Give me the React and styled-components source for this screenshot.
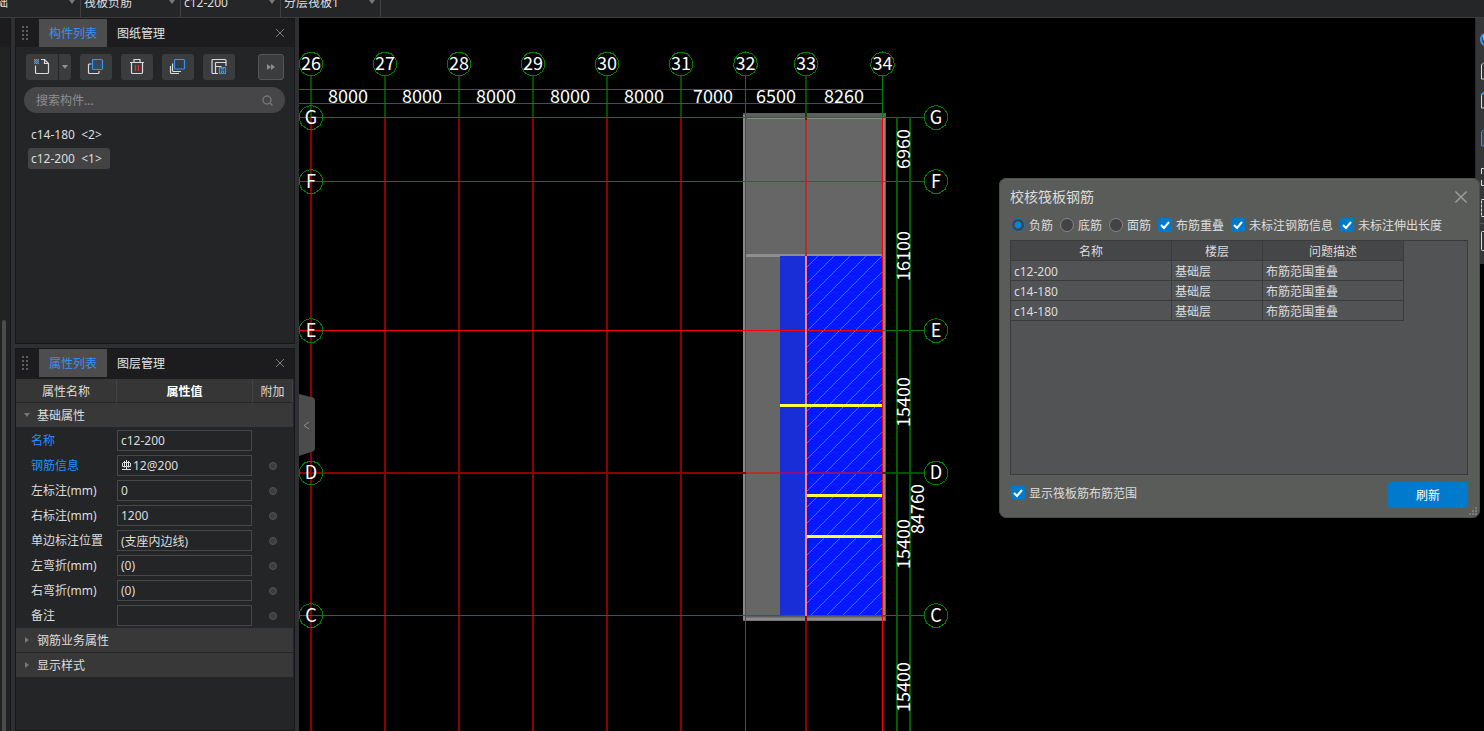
import React from "react";
import styled, { createGlobalStyle, css } from "styled-components";

const Global = createGlobalStyle`
  * { box-sizing: border-box; }
  body {
    margin: 0;
    background: #000;
    overflow: hidden;
    color: #dcdcdc;
    font: 12px/16px "Noto Sans", "Noto Sans CJK SC", sans-serif;
  }
  button, input, select { font: inherit; color: inherit; margin: 0; }
  button { padding: 0; border: 0; background: none; display: flex; align-items: center; justify-content: center; }
`;

const Page = styled.div`
  display: flex;
  flex-direction: column;
  height: 100vh;
`;

/* ---- context bar ---- */
const ContextBar = styled.header`
  display: flex;
  align-items: flex-end;
  flex: none;
  height: 18px;
  overflow: hidden;
  background: #252628;
  border-bottom: 1px solid #3a3c3e;
`;
const Picker = styled.div`
  position: relative;
  flex: none;
  width: ${(p) => (p.$first ? 81 : 100)}px;
  border-right: 1px solid #3f4042;
  svg { position: absolute; right: 5px; top: 10px; pointer-events: none; }
`;
const PickerSelect = styled.select`
  display: block;
  appearance: none;
  width: 100%;
  height: 28px;
  padding: 0 ${(p) => (p.$first ? 0 : 3)}px;
  text-indent: ${(p) => (p.$first ? -4 : 0)}px;
  border: 0;
  background: transparent;
`;

/* ---- main split ---- */
const Workspace = styled.main`
  position: relative;
  display: flex;
  flex: 1;
  min-height: 0;
`;
const NavStrip = styled.nav`
  flex: none;
  width: 11px;
  padding: 302px 0 0 2px;
  background: linear-gradient(#1c1c1f 29px, #212323 29px);
  border-right: 1px solid #171719;
`;
const NavThumb = styled.div`
  width: 4px;
  height: 100%;
  border-radius: 2px 2px 0 0;
  background: #4b4b4e;
`;
const Side = styled.aside`
  display: flex;
  flex-direction: column;
  gap: 4px;
  flex: none;
  width: 288px;
  padding: 0 4px;
  background: #2e2f32;
`;
const Panel = styled.section`
  display: flex;
  flex-direction: column;
  flex: ${(p) => (p.$grow ? "1" : "0 0 326px")};
  min-height: 0;
  background: #242527;
  border: 1px solid #18181a;
`;
const PanelTabs = styled.div`
  display: flex;
  align-items: flex-start;
  flex: none;
  height: ${(p) => (p.$tall ? 30 : 28)}px;
  padding: 0 7px 0 5px;
  background: #1c1c1f;
`;
const Grip = styled.svg`
  width: 8px;
  height: 28px;
  margin-right: 10px;
  fill: #5d5d60;
`;
const Tab = styled.button`
  height: 28px;
  width: 68px;
  padding-top: 2px;
  color: ${(p) => (p.$active ? "#3a8ff7" : "#e4e4e4")};
  background: ${(p) => (p.$active ? "#4d4d4e" : "transparent")};
`;
const CloseButton = styled.button`
  width: 14px;
  height: 28px;
  margin-left: auto;
  color: #7c7c7e;
`;
const Tools = styled.div`
  display: flex;
  gap: 9px;
  padding: 7px 10px;
`;
const Tool = styled.button`
  width: 32px;
  height: 26px;
  border-radius: 3px;
  background: #3b3c3e;
`;
const SplitTool = styled.div`
  display: flex;
  gap: 1px;
  ${Tool}:first-child { border-radius: 3px 0 0 3px; }
  ${Tool}:last-child { width: 12px; border-radius: 0 3px 3px 0; }
`;
const MoreTool = styled(Tool)`
  width: 26px;
  margin-left: auto;
  border: 1px solid #55565a;
`;
const Search = styled.label`
  display: flex;
  align-items: center;
  height: 26px;
  margin: 0 9px 0 8px;
  padding: 0 12px;
  border-radius: 13px;
  background: #464648;
`;
const SearchInput = styled.input`
  flex: 1;
  min-width: 0;
  padding: 2px 0 0;
  border: 0;
  outline: 0;
  background: none;
  &::placeholder { color: #8e8e90; opacity: 1; }
`;
const Items = styled.ul`
  display: flex;
  flex-direction: column;
  align-items: flex-start;
  gap: 3px;
  margin: 11px 0 0;
  padding: 0 12px;
  list-style: none;
`;
const Item = styled.li`
  height: 21px;
  padding: 0 8px 0 3px;
  line-height: 21px;
  white-space: pre;
  border-radius: 3px;
  background: ${(p) => (p.$active ? "#434344" : "transparent")};
`;

/* ---- property table ---- */
const PropTable = styled.table`
  width: calc(100% - 1px);
  table-layout: fixed;
  border-collapse: separate;
  border-spacing: 0;
`;
const PropHead = styled.th`
  height: 24px;
  padding: 2px 0 0;
  font-weight: ${(p) => (p.$strong ? 700 : 400)};
  color: ${(p) => (p.$strong ? "#fff" : "#dcdcdc")};
  background: #363637;
  border-right: 1px solid #444446;
  border-bottom: 1px solid #242527;
`;
const PropGroup = styled.th`
  height: 25px;
  padding: 2px 0 0 8px;
  text-align: left;
  font-weight: 400;
  background: #383838;
  border-bottom: 1px solid #242527;
  svg { margin-right: 4px; vertical-align: 2px; }
`;
const PropName = styled.th`
  height: 25px;
  padding: 0 0 0 15px;
  text-align: left;
  font-weight: 400;
  white-space: nowrap;
  color: ${(p) => (p.$key ? "#2090ff" : "#dcdcdc")};
`;
const PropCell = styled.td`
  padding: 0;
  text-align: center;
`;
const PropField = styled.label`
  display: flex;
  align-items: center;
  gap: 1px;
  width: calc(100% - 1px);
  height: 21px;
  padding: 0 3px;
  border: 1px solid #48484a;
`;
const PropInput = styled.input`
  flex: 1;
  min-width: 0;
  height: 19px;
  padding: 0;
  border: 0;
  outline: 0;
  background: none;
`;
const ExtraRadio = styled.input`
  appearance: none;
  display: block;
  width: 8px;
  height: 8px;
  margin: 0 auto;
  border: 1px solid #545454;
  border-radius: 50%;
  background: #3e3e3e;
`;

/* ---- drawing area ---- */
const Stage = styled.div`
  position: relative;
  flex: 1;
  min-width: 0;
  background: #000;
`;
const Drawing = styled.svg`
  display: block;
  width: 100%;
  height: 100%;
  text { fill: #fff; font: 18px "Noto Sans CJK SC", sans-serif; text-anchor: middle; }
`;
const CollapseHandle = styled.button`
  position: absolute;
  left: 0;
  top: 376px;
  width: 16px;
  height: 62px;
`;
const RightBar = styled.div`
  display: flex;
  flex-direction: column;
  align-self: flex-start;
  flex: none;
  width: 9px;
  height: 246px;
  overflow: hidden;
  background: #353638;
  border-left: 1px solid #2a2b2d;
`;
const RightTool = styled.button`
  flex: none;
  justify-content: flex-start;
  width: 30px;
  padding-left: 4px;
  height: ${(p) => p.$h}px;
  border-top: ${(p) => (p.$sep ? "1px solid #58595b" : "0")};
`;

/* ---- dialog ---- */
const Dialog = styled.div`
  position: absolute;
  top: 160px;
  right: 4px;
  width: 481px;
  padding: 0 12px 10px;
  border-radius: 8px;
  background: #5a5c5a;
  box-shadow: inset 0 0 0 1px #4a4c4a, inset 0 2px 0 #626462;
`;
const DialogHead = styled.div`
  display: flex;
  align-items: center;
  justify-content: space-between;
  height: 38px;
  margin-left: -1px;
`;
const DialogTitle = styled.h2`
  margin: 0;
  font-size: 14px;
  line-height: 20px;
  font-weight: 400;
`;
const DialogClose = styled.button`
  width: 14px;
  height: 20px;
  color: #9c9e9c;
`;
const Filters = styled.div`
  display: flex;
  gap: 7px;
  height: 18px;
`;
const Choice = styled.label`
  display: flex;
  align-items: center;
  gap: 4px;
  white-space: nowrap;
`;
const ChoiceText = styled.span`
  padding-top: 2px;
`;
const mark = css`
  appearance: none;
  flex: none;
  width: 14px;
  height: 14px;
`;
const Radio = styled.input`
  ${mark}
  border-radius: 50%;
  border: 1px solid #858585;
  background: #434345;
  &:checked {
    border-color: #0a7acc;
    background: radial-gradient(circle, #0a84d8 3px, #434345 4px);
  }
`;
const Check = styled.input`
  ${mark}
  border-radius: 2px;
  background: #007acc;
`;
const CheckBox = styled.span`
  display: grid;
  > * { grid-area: 1 / 1; }
  svg { pointer-events: none; }
`;
const TableBox = styled.div`
  height: 235px;
  margin: 6px 0 7px -1px;
  border: 1px solid #3a3b3c;
  background: #525355;
`;
const Issues = styled.table`
  width: 393px;
  table-layout: fixed;
  border-collapse: separate;
  border-spacing: 0;
  th, td {
    height: 20px;
    padding: 2px 3px 0;
    line-height: 17px;
    text-align: left;
    font-weight: 400;
    border-right: 1px solid #3a3b3c;
    border-bottom: 1px solid #3a3b3c;
  }
  th { text-align: center; background: #454648; }
`;
const DialogFoot = styled.div`
  display: flex;
  align-items: flex-start;
  justify-content: space-between;
  ${Choice} { height: 22px; }
`;
const Refresh = styled.button`
  width: 80px;
  height: 26px;
  padding-top: 1px;
  border-radius: 3px;
  color: #fff;
  background: #007acc;
`;
const ResizeGrip = styled.svg`
  position: absolute;
  right: 3px;
  bottom: 3px;
  fill: #7b7d7d;
`;

const Cross = ({ size }) => (
  <svg width={size} height={size} viewBox="0 0 10 10" stroke="currentColor" fill="none">
    <path d="M1 1l8 8M9 1l-8 8" />
  </svg>
);
const Caret = ({ color = "#77777a", side }) => (
  <svg width="6" height="6" viewBox="0 0 6 6" fill={color}>
    <path d={side ? "M1 0l4 3-4 3z" : "M0 1h6l-3 4z"} />
  </svg>
);

/* HRB400 steel grade mark */
const RebarMark = () => (
  <svg width="11" height="12" viewBox="0 0 11 12" fill="none" stroke="#dcdcdc">
    <path d="M5.500 0V10M1 9.500h9M2 2.500h7M3.500 1v6.500M7.500 1v6.500M1.500 3v3.500h8V3" />
  </svg>
);

const GripDots = () => (
  <Grip viewBox="0 0 8 28">
    {[7, 11, 15, 19].map((y) => (
      <g key={y}>
        <rect x="1" y={y} width="2" height="2" />
        <rect x="5" y={y} width="2" height="2" />
      </g>
    ))}
  </Grip>
);

const Icon = ({ children }) => (
  <svg width="18" height="18" viewBox="0 0 18 18" fill="none" stroke="#dadada" strokeWidth="1.2">
    {children}
  </svg>
);
const NewIcon = () => (
  <Icon>
    <path d="M2.500 7.500v7a1 1 0 0 0 1 1h11a1 1 0 0 0 1-1V5.500L11.500 1.500H8M11.500 1.500v4h4" />
    <g fill="#4a9be8" stroke="none">
      <path d="M1 1h1v1H1zM3 1h1v1H3zM5 1h1v1H5zM2 2h1v1H2zM4 2h1v1H4zM1 3h1v1H1zM3 3h1v1H3zM5 3h1v1H5zM2 4h1v1H2zM4 4h1v1H4zM1 5h1v1H1zM3 5h1v1H3zM5 5h1v1H5z" />
      <path d="M1 1h5v5H1z" opacity=".4" />
    </g>
  </Icon>
);
const CopyIcon = () => (
  <Icon>
    <path d="M4.500 6H2.500a1 1 0 0 0-1 1v7.500a1 1 0 0 0 1 1H11a1 1 0 0 0 1-1V13" />
    <rect x="5.500" y="1.500" width="10" height="10" rx="1" fill="#34495f" stroke="#3a93ea" />
  </Icon>
);
const TrashIcon = () => (
  <Icon>
    <path d="M2 4.500h14M6 4V1.500h6V4M3.500 5v9.500a1 1 0 0 0 1 1h9a1 1 0 0 0 1-1V5" />
    <path d="M7.500 7v6M10.500 7v6" stroke="#e03030" />
  </Icon>
);
const LayersIcon = () => (
  <Icon>
    <path d="M3.500 5.500v7a1 1 0 0 0 1 1H12M1.500 8v6.500a1 1 0 0 0 1 1H10" />
    <rect x="5.500" y="1.500" width="10" height="9.500" rx="1" fill="#303c4c" stroke="#3a93ea" />
  </Icon>
);
const SaveIcon = () => (
  <Icon>
    <path d="M8 15.500H3a1 1 0 0 1-1-1v-12a1 1 0 0 1 1-1h12a1 1 0 0 1 1 1V8M5.500 4.500v11M5.500 8.500h6M5.500 4.500H16" />
    <path d="M9.500 9.500h6v6h-6zM11.500 15v-2h2v2M11.500 10v1h2v-1" stroke="#3a93ea" />
  </Icon>
);

/* grid axes, in drawing coordinates */
const columns = [
  ["26", 12, 2], ["27", 86, 2], ["28", 160, 2], ["29", 234, 2], ["30", 308, 2],
  ["31", 382, 2], ["32", 446.5, 1], ["33", 507, 2], ["34", 583.5, 1],
];
const rows = [["G", 99.5, 1], ["F", 163.5, 1], ["E", 312.5, 1], ["D", 455, 2], ["C", 597.5, 1]];
const spans = [
  ["8000", 49], ["8000", 123], ["8000", 197], ["8000", 271], ["8000", 345],
  ["7000", 414], ["6500", 477], ["8260", 545],
];
const heights = [
  ["6960", 604, 131], ["16100", 604, 238], ["15400", 604, 384],
  ["15400", 604, 526], ["15400", 604, 669], ["84760", 618, 491],
];
const ring = Array.from({ length: 11 }, (_, i) => {
  const a = (i * 2 * Math.PI) / 11 - Math.PI / 2;
  return `${(12 * Math.cos(a)).toFixed(1)},${(12 * Math.sin(a)).toFixed(1)}`;
}).join(" ");

const Bubble = ({ x, y, children }) => (
  <g transform={`translate(${x} ${y})`}>
    <polygon points={ring} fill="none" stroke="#008000" shapeRendering="crispEdges" />
    <text y="6">{children}</text>
  </g>
);
const red = (w) => (w === 2 ? "#8b0000" : "#ff0000");
const green = (w) => (w === 2 ? "#004f00" : "#008000");

const Plan = () => (
  <Drawing>
    <defs>
      <pattern id="hatch" width="16" height="16" patternUnits="userSpaceOnUse" x="507" y="238">
        <path d="M-4 16L12 0M0 28L28 0" stroke="#f010ff" shapeRendering="crispEdges" />
      </pattern>
    </defs>
    <rect x="444" y="95" width="143" height="508" fill="#5e5e5e" />
    <path d="M445.500 97V601H586" fill="none" stroke="#8a8a8a" strokeWidth="3" />
    <path d="M448 100.500h137V598" fill="none" stroke="#8a8a8a" strokeWidth="2" />
    <rect x="447" y="101" width="135" height="496" fill="#666" />
    <path d="M447 237.500h136" stroke="#8e8e8e" strokeWidth="3" />
    <rect x="481" y="238" width="26" height="360" fill="#1a2ed8" />

    {columns.map(([n, x, w]) => (
      <g key={n}>
        <path d={`M${x} 57V100`} stroke={green(w)} strokeWidth={w} />
        <path d={`M${x} 99V2000`} stroke={red(w)} strokeWidth={w} />
      </g>
    ))}
    {rows.map(([n, y, w]) => (
      <g key={n}>
        <path d={`M0 ${y}H584`} stroke={red(w)} strokeWidth={w} />
        <path d={`M584 ${y}H625`} stroke={green(w)} strokeWidth={w} />
      </g>
    ))}
    <path d="M507 102V238M447 455H481" stroke="#b03030" strokeWidth="2" />

    <rect x="508" y="238" width="75" height="359" fill="#001aff" />
    <rect x="508" y="238" width="75" height="359" fill="url(#hatch)" />
    <path d="M481 455h102" stroke="#8c1080" strokeWidth="2" />
    <path d="M481 312.500h102" stroke="#ff0000" />
    <path d="M507 238V598" stroke="#ff8080" strokeWidth="2" />
    <path d="M481 387.500H583M508 477.500h75M508 518.500h75" stroke="#ffff40" strokeWidth="3" />

    <path d="M0 71.500H584M0 85.500H584" stroke="#008000" />
    <path d="M598 99V2000M611 99V2000" stroke="#006000" strokeWidth="2" />
    {spans.map(([t, x]) => <text key={x} x={x} y="85">{t}</text>)}
    {heights.map(([t, x, y]) => (
      <text key={y} transform={`translate(${x} ${y}) rotate(-90)`} y="7">{t}</text>
    ))}
    {columns.map(([n, x]) => <Bubble key={n} x={x} y={46}>{n}</Bubble>)}
    {rows.map(([n, y]) => (
      <g key={n}>
        <Bubble x={12} y={y}>{n}</Bubble>
        <Bubble x={637} y={y}>{n}</Bubble>
      </g>
    ))}
  </Drawing>
);

const props = [
  { name: "名称", value: "c12-200", key: true },
  { name: "钢筋信息", value: "12@200", key: true, extra: true, rebar: true },
  { name: "左标注(mm)", value: "0", extra: true },
  { name: "右标注(mm)", value: "1200", extra: true },
  { name: "单边标注位置", value: "(支座内边线)", extra: true },
  { name: "左弯折(mm)", value: "(0)", extra: true },
  { name: "右弯折(mm)", value: "(0)", extra: true },
  { name: "备注", value: "", extra: true },
];

const Checkbox = ({ children }) => (
  <Choice>
    <CheckBox>
      <Check type="checkbox" defaultChecked />
      <svg width="14" height="14" viewBox="0 0 14 14" fill="none" stroke="#fff" strokeWidth="2">
        <path d="M3 7l3 3 5-6" />
      </svg>
    </CheckBox>
    <ChoiceText>{children}</ChoiceText>
  </Choice>
);

const PanelHeader = ({ active, other, tall }) => (
  <PanelTabs $tall={tall}>
    <GripDots />
    <Tab $active>{active}</Tab>
    <Tab>{other}</Tab>
    <CloseButton aria-label="关闭"><Cross size={10} /></CloseButton>
  </PanelTabs>
);

export default function App() {
  return (
    <Page>
      <Global />
      <ContextBar>
        {["础", "筏板负筋", "c12-200", "分层筏板1"].map((t, i) => (
          <Picker key={t} $first={i === 0}>
            <PickerSelect $first={i === 0} aria-label={t}><option>{t}</option></PickerSelect>
            <Caret />
          </Picker>
        ))}
      </ContextBar>
      <Workspace>
        <NavStrip><NavThumb /></NavStrip>
        <Side>
          <Panel>
            <PanelHeader active="构件列表" other="图纸管理" />
            <Tools>
              <SplitTool>
                <Tool aria-label="新建"><NewIcon /></Tool>
                <Tool aria-label="新建选项"><Caret color="#8e8e90" /></Tool>
              </SplitTool>
              <Tool aria-label="复制"><CopyIcon /></Tool>
              <Tool aria-label="删除"><TrashIcon /></Tool>
              <Tool aria-label="层间复制"><LayersIcon /></Tool>
              <Tool aria-label="存档"><SaveIcon /></Tool>
              <MoreTool aria-label="更多">
                <svg width="8" height="6" viewBox="0 0 8 6" fill="#8c8c8e"><path d="M0 0l4 3-4 3zM4 0l4 3-4 3z" /></svg>
              </MoreTool>
            </Tools>
            <Search>
              <SearchInput placeholder="搜索构件..." aria-label="搜索构件" />
              <svg width="11" height="11" viewBox="0 0 11 11" fill="none" stroke="#747476" strokeWidth="1.500">
                <circle cx="5" cy="5" r="4" /><path d="M8 8l2.500 2.500" />
              </svg>
            </Search>
            <Items>
              <Item>{"c14-180  <2>"}</Item>
              <Item $active>{"c12-200  <1>"}</Item>
            </Items>
          </Panel>
          <Panel $grow>
            <PanelHeader active="属性列表" other="图层管理" tall />
            <PropTable>
              <colgroup><col width="101" /><col /><col width="40" /></colgroup>
              <thead>
                <tr><PropHead>属性名称</PropHead><PropHead $strong>属性值</PropHead><PropHead>附加</PropHead></tr>
              </thead>
              <tbody>
                <tr><PropGroup colSpan={3}><Caret /> 基础属性</PropGroup></tr>
                {props.map(({ name, value, key, extra, rebar }) => (
                  <tr key={name}>
                    <PropName $key={key}>{name}</PropName>
                    <PropCell>
                      <PropField>
                        {rebar && <RebarMark />}
                        <PropInput defaultValue={value} aria-label={name} />
                      </PropField>
                    </PropCell>
                    <PropCell>{extra && <ExtraRadio type="radio" aria-label={`附加 ${name}`} />}</PropCell>
                  </tr>
                ))}
                <tr><PropGroup colSpan={3}><Caret side /> 钢筋业务属性</PropGroup></tr>
                <tr><PropGroup colSpan={3}><Caret side /> 显示样式</PropGroup></tr>
              </tbody>
            </PropTable>
          </Panel>
        </Side>
        <Stage>
          <Plan />
          <CollapseHandle aria-label="收起">
            <svg width="16" height="62" viewBox="0 0 16 62">
              <path d="M0 0l12 3a4 4 0 0 1 4 4v46a4 4 0 0 1-4 5l-12 4z" fill="#4c4c4c" />
              <path d="M10 28l-5 3.500 5 3.500" fill="none" stroke="#8e8e8e" />
            </svg>
          </CollapseHandle>
        </Stage>
        <RightBar>
          <RightTool $h={38} aria-label="动态观察">
            <svg width="20" height="28" viewBox="0 0 20 28" fill="none"><path d="M4 11C0 14 0 19 4 22" stroke="#3a93ea" strokeWidth="2" /><path d="M6 9C2 13 4 19 6 20" stroke="#ddd" /></svg>
          </RightTool>
          <RightTool $h={30} aria-label="俯视">
            <svg width="20" height="18" viewBox="0 0 20 18" fill="none" stroke="#ddd"><path d="M4 .5L1.500 3v14H18" /></svg>
          </RightTool>
          <RightTool $h={28} aria-label="三维">
            <svg width="20" height="18" viewBox="0 0 20 18" fill="none" stroke="#ddd"><path d="M1.500 4v13H18" /><path d="M1 4l4-3" stroke="#3a93ea" strokeWidth="2" /></svg>
          </RightTool>
          <RightTool $h={48} aria-label="实体">
            <svg width="20" height="18" viewBox="0 0 20 18" stroke="#3a93ea" fill="#34495f"><path d="M4 .5L1.500 3v14H18V.5z" /></svg>
          </RightTool>
          <RightTool $h={30} aria-label="全屏">
            <svg width="20" height="20" viewBox="0 0 20 20" fill="none" stroke="#ddd"><path d="M1.500 7V1.500H7M1.500 13v5.500H7" /></svg>
          </RightTool>
          <RightTool $h={31} aria-label="局部">
            <svg width="20" height="20" viewBox="0 0 20 20" fill="none" stroke="#ddd" strokeDasharray="3 1"><rect x="1.500" y="1.500" width="17" height="17" /></svg>
          </RightTool>
          <RightTool $h={34} $sep aria-label="显示设置">
            <svg width="20" height="20" viewBox="0 0 20 20" fill="none" stroke="#ddd"><rect x="1.500" y=".5" width="17" height="19" rx="1" /></svg>
          </RightTool>
        </RightBar>
        <Dialog role="dialog" aria-label="校核筏板钢筋">
          <DialogHead>
            <DialogTitle>校核筏板钢筋</DialogTitle>
            <DialogClose aria-label="关闭"><Cross size={14} /></DialogClose>
          </DialogHead>
          <Filters>
            {["负筋", "底筋", "面筋"].map((t, i) => (
              <Choice key={t}>
                <Radio type="radio" name="kind" defaultChecked={i === 0} />
                <ChoiceText>{t}</ChoiceText>
              </Choice>
            ))}
            <Checkbox>布筋重叠</Checkbox>
            <Checkbox>未标注钢筋信息</Checkbox>
            <Checkbox>未标注伸出长度</Checkbox>
          </Filters>
          <TableBox>
            <Issues>
              <colgroup><col width="161" /><col width="91" /><col width="141" /></colgroup>
              <thead><tr><th>名称</th><th>楼层</th><th>问题描述</th></tr></thead>
              <tbody>
                {["c12-200", "c14-180", "c14-180"].map((n, i) => (
                  <tr key={i}><td>{n}</td><td>基础层</td><td>布筋范围重叠</td></tr>
                ))}
              </tbody>
            </Issues>
          </TableBox>
          <DialogFoot>
            <Checkbox>显示筏板筋布筋范围</Checkbox>
            <Refresh>刷新</Refresh>
          </DialogFoot>
          <ResizeGrip width="9" height="9" viewBox="0 0 9 9">
            <path d="M7 1h2v2H7zM7 4h2v2H7zM7 7h2v2H7zM4 4h2v2H4zM4 7h2v2H4zM1 7h2v2H1z" />
          </ResizeGrip>
        </Dialog>
      </Workspace>
    </Page>
  );
}
